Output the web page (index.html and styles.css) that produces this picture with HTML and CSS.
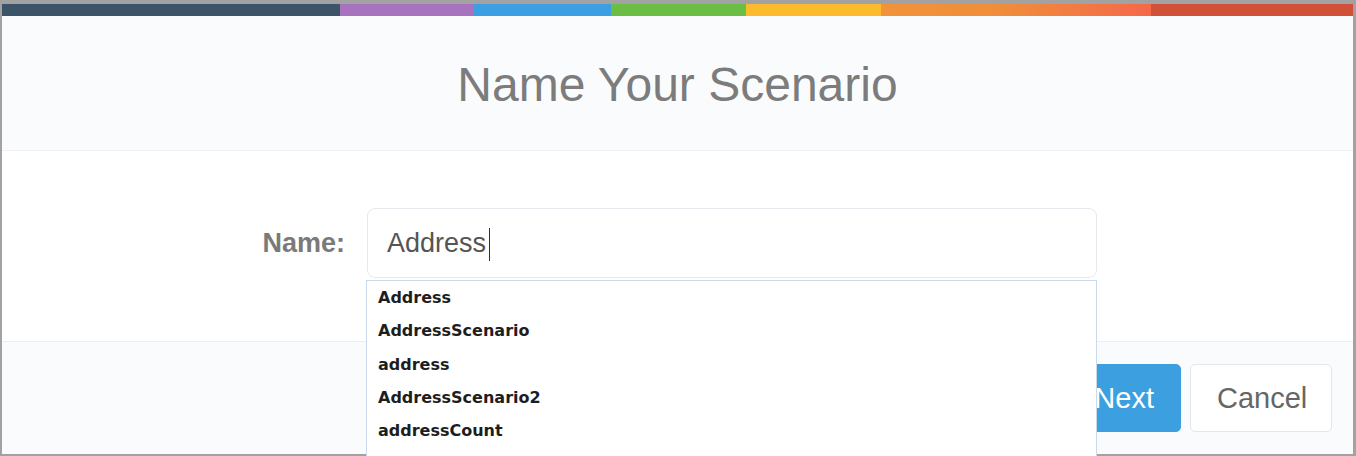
FILE: index.html
```html
<!DOCTYPE html>
<html>
<head>
<meta charset="utf-8">
<link rel="stylesheet" href="styles.css">
</head>
<body>
<div class="screen">
  <div class="modal">
    <div class="colorbar">
      <span class="seg seg-slate"></span>
      <span class="seg seg-purple"></span>
      <span class="seg seg-blue"></span>
      <span class="seg seg-green"></span>
      <span class="seg seg-yellow"></span>
      <span class="seg seg-orange"></span>
      <span class="seg seg-red"></span>
    </div>
    <div class="header">
      <h1 class="title">Name Your Scenario</h1>
    </div>
    <div class="body">
      <div class="form-row">
        <label class="label">Name:</label>
        <div class="field">
          <div class="input"><span class="value">Address</span><span class="caret"></span></div>
          <ul class="suggest">
            <li>Address</li>
            <li>AddressScenario</li>
            <li>address</li>
            <li>AddressScenario2</li>
            <li>addressCount</li>
          </ul>
        </div>
      </div>
    </div>
    <div class="footer">
      <button class="btn btn-primary">Next</button>
      <button class="btn btn-default">Cancel</button>
    </div>
  </div>
</div>
</body>
</html>
```

FILE: styles.css
```css
html, body {
  margin: 0;
  padding: 0;
}
body {
  width: 1356px;
  height: 456px;
  overflow: hidden;
  background: #a2a2a2;
  font-family: "Liberation Sans", Arial, sans-serif;
}
.screen {
  padding: 4px 3px 0 2px;
}
.modal {
  width: 1351px;
  height: 450px;
  background: #ffffff;
  display: flex;
  flex-direction: column;
}
.colorbar {
  display: flex;
  height: 12px;
  flex: 0 0 12px;
}
.seg { display: block; height: 100%; }
.seg-slate { flex: 0 0 338px; background: #3d5368; }
.seg-purple { flex: 0 0 134px; background: #a873be; }
.seg-blue { flex: 0 0 137px; background: #3b9fe1; }
.seg-green { flex: 0 0 135px; background: #6bbe44; }
.seg-yellow { flex: 0 0 135px; background: #fcbb2e; }
.seg-orange { flex: 0 0 270px; background: linear-gradient(90deg, #f0933a 0%, #ef8d3c 45%, #f5684a 100%); }
.seg-red { flex: 0 0 202px; background: #d1503a; }

.header {
  box-sizing: border-box;
  height: 135px;
  flex: 0 0 135px;
  background: #fafbfd;
  border-bottom: 1px solid #eef0f3;
  padding-top: 45px;
}
.title {
  margin: 0;
  text-align: center;
  font-size: 48px;
  line-height: 48px;
  font-weight: normal;
  color: #7c7c7c;
}

.body {
  box-sizing: border-box;
  height: 190px;
  flex: 0 0 190px;
  padding-top: 57px;
}
.form-row {
  display: flex;
  align-items: center;
  gap: 22px;
}
.label {
  flex: 0 0 343px;
  text-align: right;
  font-size: 27px;
  font-weight: bold;
  color: #7a7a7a;
}
.field {
  position: relative;
  flex: 0 0 730px;
}
.input {
  box-sizing: border-box;
  height: 70px;
  border: 1px solid #e6eaee;
  border-radius: 8px;
  padding-left: 19px;
  display: flex;
  align-items: center;
  font-size: 27px;
  color: #555555;
}
.caret {
  display: inline-block;
  width: 1px;
  height: 33px;
  margin-left: 3px;
  margin-top: 2px;
  background: #333333;
}
.suggest {
  position: absolute;
  top: 72px;
  left: -1px;
  width: 731px;
  box-sizing: border-box;
  margin: 0;
  padding: 0 0 20px 0;
  list-style: none;
  background: #ffffff;
  border: 1px solid #cbdaeb;
  z-index: 5;
}
.suggest li {
  padding-left: 11px;
  line-height: 33.3px;
  font-family: "DejaVu Sans", Verdana, sans-serif;
  font-weight: bold;
  font-size: 16px;
  color: #1e1e1e;
}

.footer {
  box-sizing: border-box;
  flex: 0 0 113px;
  height: 113px;
  background: #fafbfd;
  border-top: 1px solid #eceef1;
  padding: 22px 21px 22px 0;
  display: flex;
  justify-content: flex-end;
  gap: 9px;
}
.btn {
  height: 68px;
  box-sizing: border-box;
  padding: 0 26px;
  font-family: "Liberation Sans", Arial, sans-serif;
  font-size: 29px;
  border-radius: 5px;
  cursor: pointer;
}
.btn-primary {
  background: #3c9fe0;
  color: #ffffff;
  border: 1px solid #3c9fe0;
}
.btn-default {
  width: 142px;
  background: #ffffff;
  color: #666666;
  border: 1px solid #e3e6ea;
}
```
